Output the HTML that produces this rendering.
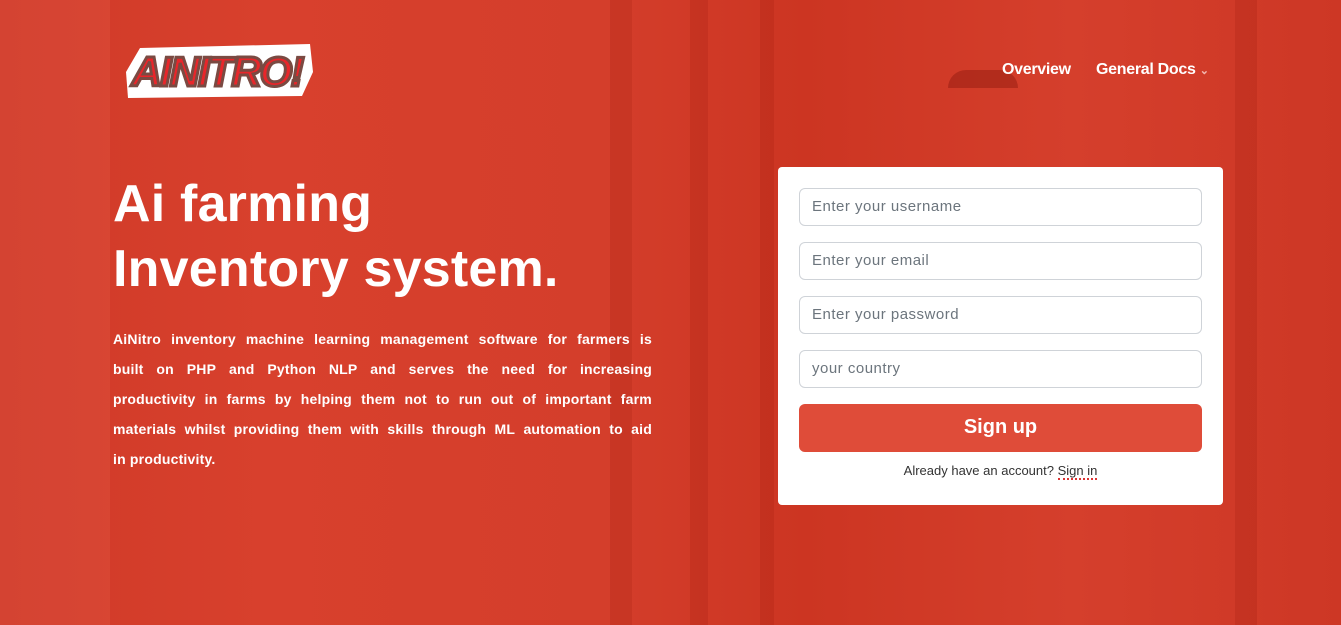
<!DOCTYPE html>
<html><head><style>
*{margin:0;padding:0;box-sizing:border-box}
body{width:1341px;height:625px;overflow:hidden;font-family:"Liberation Sans",sans-serif;position:relative;
background:linear-gradient(90deg,#cf3a28 0%,#d8402d 20%,#d43e2b 45%,#cc3522 60%,#d53f2c 80%,#cd3725 100%);}
.bar{position:absolute;background:rgba(150,20,10,.18)}
.lite{position:absolute;background:rgba(255,140,120,.12)}
.logo{position:absolute;left:120px;top:42px;width:195px;height:58px;}
.nav{position:absolute;top:61px;color:#fff;font-weight:bold;font-size:16px;letter-spacing:-.3px}
h1{position:absolute;left:113px;top:172px;color:#fff;font-size:52px;line-height:65px;font-weight:bold;letter-spacing:.2px}
.d{position:absolute;left:113px;top:324px;width:539px;color:#fff;font-size:14px;line-height:30px;font-weight:bold;letter-spacing:.2px}
.d div{height:30px;white-space:nowrap;display:flex;justify-content:space-between}
.d div.last{display:block;text-align:left;text-align-last:left}
.card{position:absolute;left:778px;top:167px;width:445px;height:338px;background:#fff;border-radius:4px}
.in{position:absolute;left:21px;width:403px;height:38px;border:1px solid #cfd3d8;border-radius:6px;color:#6c757d;font-size:15px;padding:9px 12px;letter-spacing:.5px}
.btn{position:absolute;left:21px;top:237px;width:403px;height:48px;background:#df4c39;border-radius:6px;color:#fff;font-size:20px;font-weight:bold;text-align:center;line-height:46px}
.al{position:absolute;left:0;width:445px;top:296px;text-align:center;font-size:13px;color:#333}
.al span{border-bottom:2px dotted #d33;}
</style></head><body>
<div class="lite" style="left:0;top:0;width:110px;height:625px"></div>
<div class="bar" style="left:610px;top:0;width:22px;height:625px"></div>
<div class="bar" style="left:690px;top:0;width:18px;height:625px"></div>
<div class="bar" style="left:760px;top:0;width:14px;height:625px"></div>
<div class="bar" style="left:1235px;top:0;width:22px;height:625px"></div>
<div class="bar" style="left:948px;top:70px;width:70px;height:18px;border-radius:35px 35px 0 0;background:rgba(120,15,5,.35)"></div>
<svg class="logo" viewBox="0 0 195 58">
<path d="M6 30 L20 6 L190 2 L193 30 L182 54 L8 56 Z" fill="#fff"/>
<text x="97" y="44" text-anchor="middle" font-family="Liberation Sans" font-weight="bold" font-style="italic" font-size="42" fill="#e8262a" stroke="#7a4a42" stroke-width="3" letter-spacing="-2">AINITRO!</text>
</svg>
<div class="nav" style="left:1002px">Overview</div>
<div class="nav" style="left:1096px">General Docs <span style="font-size:11px;color:#f2b8b0">&#8964;</span></div>
<h1>Ai farming<br>Inventory system.</h1>
<div class="d">
<div><span>AiNitro</span><span>inventory</span><span>machine</span><span>learning</span><span>management</span><span>software</span><span>for</span><span>farmers</span><span>is</span></div>
<div><span>built</span><span>on</span><span>PHP</span><span>and</span><span>Python</span><span>NLP</span><span>and</span><span>serves</span><span>the</span><span>need</span><span>for</span><span>increasing</span></div>
<div><span>productivity</span><span>in</span><span>farms</span><span>by</span><span>helping</span><span>them</span><span>not</span><span>to</span><span>run</span><span>out</span><span>of</span><span>important</span><span>farm</span></div>
<div><span>materials</span><span>whilst</span><span>providing</span><span>them</span><span>with</span><span>skills</span><span>through</span><span>ML</span><span>automation</span><span>to</span><span>aid</span></div>
<div class="last">in productivity.</div>
</div>
<div class="card">
<div class="in" style="top:21px">Enter your username</div>
<div class="in" style="top:75px">Enter your email</div>
<div class="in" style="top:129px">Enter your password</div>
<div class="in" style="top:183px">your country</div>
<div class="btn">Sign up</div>
<div class="al">Already have an account? <span>Sign in</span></div>
</div>
</body></html>
